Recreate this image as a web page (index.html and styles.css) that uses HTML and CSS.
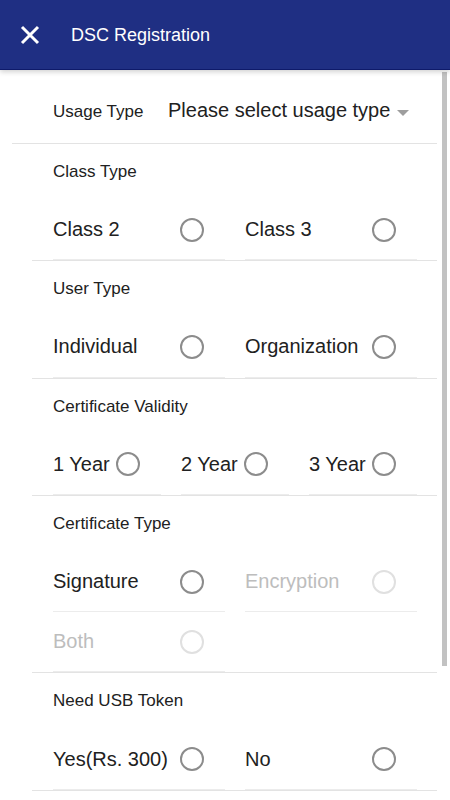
FILE: index.html
```html
<!DOCTYPE html>
<html lang="en">
<head>
    <meta charset="UTF-8">
    <meta name="viewport" content="width=device-width, initial-scale=1.0">
    <title>DSC Registration</title>
    <link rel="stylesheet" href="styles.css">
</head>
<body>
    <div class="header">
        <svg class="close-icon" width="20" height="20" viewBox="0 0 20 20">
            <path d="M2 2 L18 18 M18 2 L2 18" stroke="#fff" stroke-width="3" fill="none"/>
        </svg>
        <h1>DSC Registration</h1>
    </div>
    <div class="content">
        <div class="usage-row">
            <span class="usage-label">Usage Type</span>
            <span class="usage-select">Please select usage type</span>
            <span class="caret"></span>
        </div>

        <div class="section">
            <div class="section-label">Class Type</div>
            <div class="options two">
                <div class="option"><span>Class 2</span><span class="radio"></span></div>
                <div class="option"><span>Class 3</span><span class="radio"></span></div>
            </div>
        </div>

        <div class="section">
            <div class="section-label">User Type</div>
            <div class="options two">
                <div class="option"><span>Individual</span><span class="radio"></span></div>
                <div class="option"><span>Organization</span><span class="radio"></span></div>
            </div>
        </div>

        <div class="section">
            <div class="section-label">Certificate Validity</div>
            <div class="options three">
                <div class="option"><span>1 Year</span><span class="radio"></span></div>
                <div class="option"><span>2 Year</span><span class="radio"></span></div>
                <div class="option"><span>3 Year</span><span class="radio"></span></div>
            </div>
        </div>

        <div class="section">
            <div class="section-label">Certificate Type</div>
            <div class="options two">
                <div class="option"><span>Signature</span><span class="radio"></span></div>
                <div class="option disabled"><span>Encryption</span><span class="radio"></span></div>
                <div class="option disabled"><span>Both</span><span class="radio"></span></div>
            </div>
        </div>

        <div class="section">
            <div class="section-label">Need USB Token</div>
            <div class="options two">
                <div class="option"><span>Yes(Rs. 300)</span><span class="radio"></span></div>
                <div class="option"><span>No</span><span class="radio"></span></div>
            </div>
        </div>

        <div class="scrollbar"></div>
    </div>
</body>
</html>
```

FILE: styles.css
```css
body {
    font-family: "Liberation Sans", Arial, sans-serif;
    background-color: #fff;
    margin: 0;
    padding: 0;
    color: #212121;
}
.header {
    height: 69px;
    background-color: #1f2f83;
    border-bottom: 1px solid #0e1a6a;
    box-shadow: 0 2px 5px rgba(0, 0, 0, 0.18);
    display: flex;
    align-items: center;
    position: relative;
    z-index: 1;
}
.close-icon {
    margin-left: 20px;
    margin-top: 1px;
}
.header h1 {
    margin: 2px 0 0 31px;
    font-size: 18px;
    font-weight: normal;
    color: #fff;
}
.content {
    position: relative;
    padding-right: 13px;
}
.usage-row {
    display: flex;
    align-items: center;
    height: 65px;
    padding-top: 8px;
    margin-left: 12px;
    padding-left: 41px;
    border-bottom: 1px solid #e3e3e3;
}
.usage-label {
    font-size: 17px;
    margin-top: 3px;
    width: 115px;
}
.usage-select {
    font-size: 20px;
}
.caret {
    margin-left: 7px;
    margin-top: 4px;
    border-left: 6px solid transparent;
    border-right: 6px solid transparent;
    border-top: 6px solid #9e9e9e;
}
.section {
    margin-left: 32px;
    padding: 18px 20px 0 21px;
    border-bottom: 1px solid #e3e3e3;
}
.section-label {
    font-size: 17px;
    line-height: 20px;
    margin-bottom: 18px;
}
.options {
    display: grid;
    column-gap: 20px;
}
.options.two {
    grid-template-columns: 1fr 1fr;
}
.options.three {
    grid-template-columns: 1fr 1fr 1fr;
}
.option {
    height: 60.3px;
    box-sizing: border-box;
    border-bottom: 1px solid #ececec;
    display: flex;
    align-items: center;
    justify-content: space-between;
    padding-right: 21px;
    font-size: 20px;
}
.radio {
    width: 20px;
    height: 20px;
    border: 2px solid #8c8c8c;
    border-radius: 50%;
}
.option.disabled {
    color: #bdbdbd;
}
.option.disabled .radio {
    border-color: #e0e0e0;
}
.scrollbar {
    position: absolute;
    top: 2px;
    right: 3px;
    width: 5px;
    height: 594px;
    background-color: #c2c2c2;
}
```
